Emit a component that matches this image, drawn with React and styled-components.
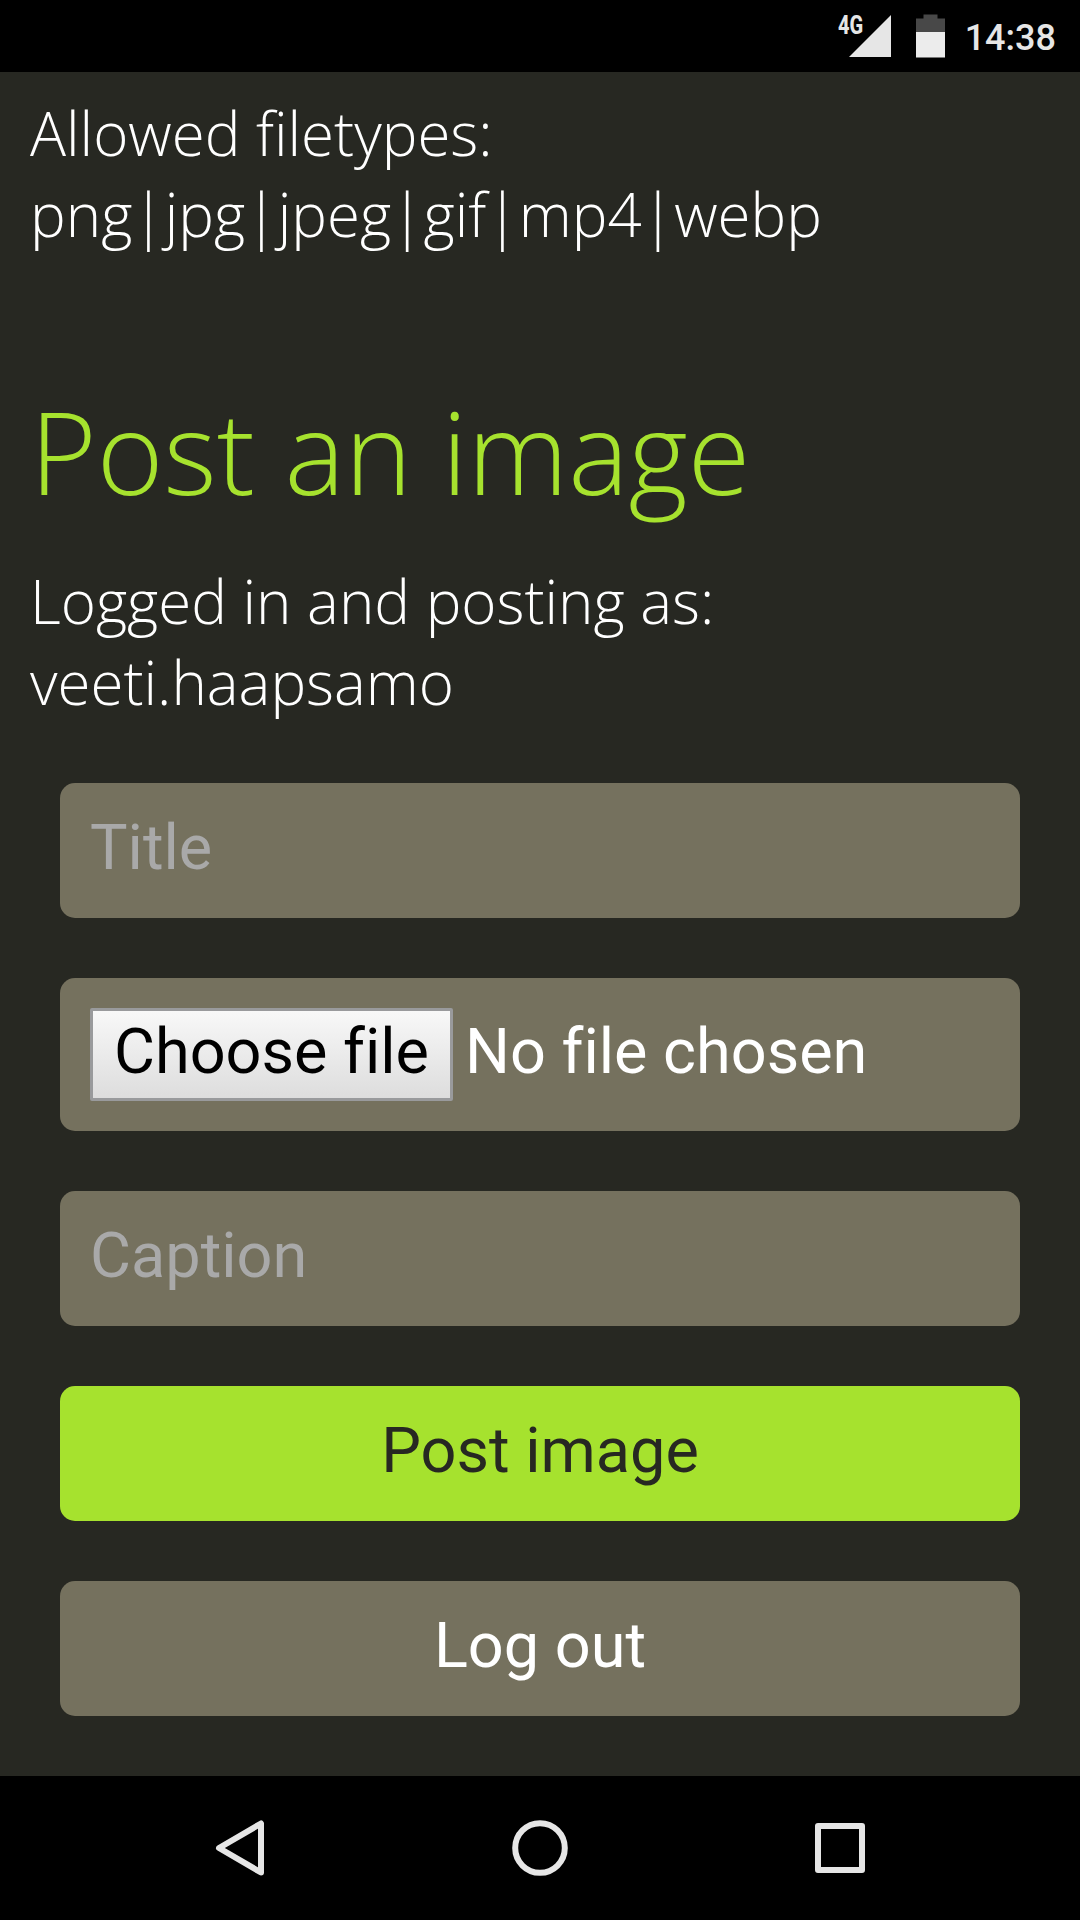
import React from "react";
import styled, { createGlobalStyle } from "styled-components";

const GlobalStyle = createGlobalStyle`
  * { box-sizing: border-box; }
  body { margin: 0; background: #272822; }
`;

const Screen = styled.div`
  display: flex;
  flex-direction: column;
  width: 1080px;
  height: 1920px;
  overflow: hidden;
  background: #272822;
  color: #fff;
  font-family: "Open Sans", sans-serif;
  font-weight: 300;
`;

const StatusBar = styled.header`
  display: flex;
  justify-content: flex-end;
  flex: none;
  height: 72px;
  padding-right: 24px;
  background: #000;
  color: #e6e6e6;
  font-family: Roboto, sans-serif;
`;

const Network = styled.span`
  width: 26px;
  margin: 13px -15px 0 0;
  font-size: 25px;
  line-height: 25px;
  font-weight: 800;
  transform: scaleX(0.8);
  transform-origin: left;
  white-space: nowrap;
`;

const StatusIcon = styled.svg`
  display: block;
  flex: none;
  margin-top: 14px;
  margin-right: ${(p) => p.$gap}px;
`;

const Clock = styled.time`
  margin-top: 17px;
  font-size: 36px;
  line-height: 42px;
  font-weight: 500;
`;

const Content = styled.main`
  flex: 1;
  padding: 21px 30px 0;
`;

const Paragraph = styled.p`
  margin: 0;
  font-size: 60px;
  line-height: 81px;
`;

const Heading = styled.h1`
  margin: 118px 0 32px;
  color: #a6e22e;
  font-size: 114px;
  line-height: 156px;
  font-weight: 300;
`;

const Form = styled.form`
  display: flex;
  flex-direction: column;
  gap: 60px;
  margin: 60px 30px 0;
  font: 400 63px/75px Roboto, sans-serif;
  font-variant-ligatures: none;
`;

const Field = styled.input`
  display: block;
  width: 100%;
  height: 135px;
  padding: 27px 30px 33px;
  border: 0;
  border-radius: 15px;
  background: #75715e;
  color: #fff;
  font: inherit;
  &::placeholder { color: #a9a9a9; opacity: 1; }
`;

const FileField = styled.div`
  display: flex;
  align-items: center;
  gap: 12px;
  height: 153px;
  padding: 30px;
  border-radius: 15px;
  background: #75715e;
`;

const FileButton = styled.button`
  width: 363px;
  height: 93px;
  padding: 0 0 6px;
  border: 3px solid #999a9c;
  border-radius: 2px;
  background: linear-gradient(#f8f8f8, #dddddd);
  color: #000;
  font: inherit;
  font-variant-ligatures: none;
  white-space: nowrap;
`;

const FileStatus = styled.span`
  margin-bottom: 6px;
`;

const Button = styled.button`
  height: 135px;
  padding: 27px 30px 33px;
  border: 0;
  border-radius: 15px;
  background: ${(p) => (p.$primary ? "#a6e22e" : "#75715e")};
  color: ${(p) => (p.$primary ? "#272822" : "#fff")};
  font: inherit;
`;

const NavBar = styled.nav`
  display: grid;
  grid-template-columns: repeat(3, 300px);
  justify-content: center;
  place-items: center;
  flex: none;
  height: 144px;
  background: #000;
`;

const NavIcon = styled.svg`
  display: block;
  width: 60px;
  height: 60px;
  fill: none;
  stroke: #e6e6e6;
  stroke-width: 6;
  stroke-linejoin: round;
`;

export default function App() {
  return (
    <>
      <GlobalStyle />
      <Screen>
        <StatusBar>
          <Network>4G</Network>
          <StatusIcon $gap={25} width="42" height="44" viewBox="0 0 42 44">
            <path d="M42 1V43H0Z" fill="#e6e6e6" />
          </StatusIcon>
          <StatusIcon $gap={20} width="29" height="44" viewBox="0 0 29 44">
            <path d="M7.5 0.5H21.5V4.5H29V18H0V4.5H7.5Z" fill="#484848" />
            <path d="M0 18H29V43.5H0Z" fill="#ececec" />
          </StatusIcon>
          <Clock>14:38</Clock>
        </StatusBar>
        <Content>
          <Paragraph>
            Allowed filetypes:
            <br />
            png|jpg|jpeg|gif|mp4|webp
          </Paragraph>
          <Heading>Post an image</Heading>
          <Paragraph>
            Logged in and posting as:
            <br />
            veeti.haapsamo
          </Paragraph>
          <Form onSubmit={(e) => e.preventDefault()}>
            <Field placeholder="Title" />
            <FileField>
              <FileButton type="button">Choose file</FileButton>
              <FileStatus>No file chosen</FileStatus>
            </FileField>
            <Field placeholder="Caption" />
            <Button $primary type="submit">Post image</Button>
            <Button type="button">Log out</Button>
          </Form>
        </Content>
        <NavBar>
          <NavIcon viewBox="0 0 60 60">
            <path d="M51 5.5V54.5L9 30Z" />
          </NavIcon>
          <NavIcon viewBox="0 0 60 60">
            <circle cx="30" cy="30" r="24.8" />
          </NavIcon>
          <NavIcon viewBox="0 0 60 60">
            <rect x="8" y="8" width="44" height="44" />
          </NavIcon>
        </NavBar>
      </Screen>
    </>
  );
}
